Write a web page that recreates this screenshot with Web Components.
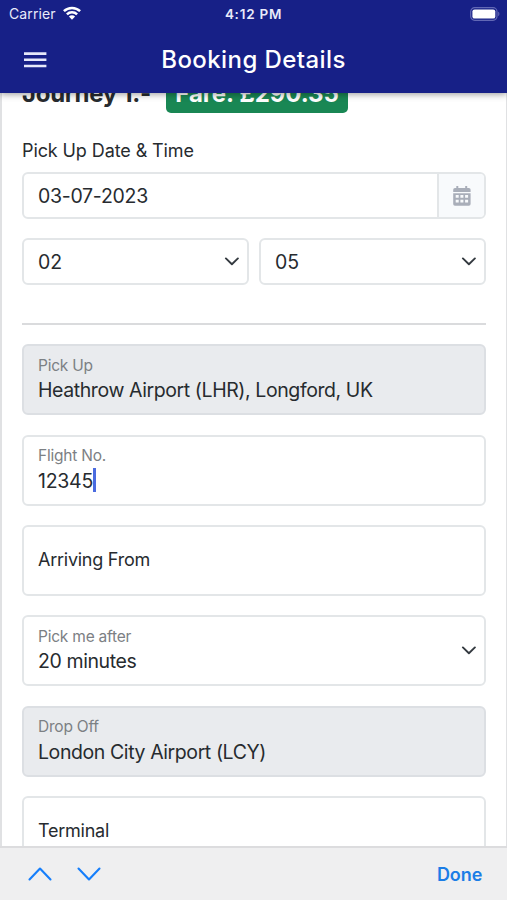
<!DOCTYPE html>
<html lang="en">
<head>
<meta charset="utf-8">
<title>Booking Details</title>
<style>
  html, body { margin: 0; height: 100%; }
  body { font-family: Inter, "Liberation Sans", sans-serif; color: #272b2f; overflow: hidden; background: #fff; }
</style>
</head>
<body>
<booking-app></booking-app>
<script>
const define = (name, html) => {
  const tpl = document.createElement('template');
  tpl.innerHTML = html;
  customElements.define(name, class extends HTMLElement {
    constructor() {
      super();
      this.attachShadow({ mode: 'open' }).append(tpl.content.cloneNode(true));
    }
  });
};

define('status-bar', `
<style>
  :host { display: grid; grid-template-columns: 1fr auto 1fr; align-items: center; height: 28px; padding: 0 7px 0 9px; color: #e9eafa; box-sizing: border-box; }
  .carrier { display: flex; align-items: center; gap: 7px; font-size: 14px; line-height: 16px; letter-spacing: .12px; margin-top: -1px; }
  .time { font-size: 13.5px; font-weight: 600; letter-spacing: .75px; margin-left: -2px; }
  .battery { justify-self: end; display: block; }
  svg { display: block; margin-top: -1px; }
</style>
<div class="carrier"><span>Carrier</span>
  <svg width="18" height="14" viewBox="0 0 18 14" fill="none" stroke="#fff" stroke-width="2.5">
    <path d="M.9 5.2a11.6 11.6 0 0 1 16.2 0"/><path d="M3.9 8.4a7.2 7.2 0 0 1 10.2 0"/>
    <path d="M9 13.8 5.9 10.6a4.4 4.4 0 0 1 6.2 0z" fill="#fff" stroke="none"/>
  </svg></div>
<div class="time">4:12 PM</div>
<svg class="battery" width="30" height="14" viewBox="0 0 30 14">
  <rect x=".7" y=".7" width="26.3" height="12.6" rx="4" fill="none" stroke="#6268b5" stroke-width="1.2"/>
  <rect x="2.4" y="2.4" width="22.9" height="9.2" rx="2.2" fill="#fff"/>
  <path d="M28.2 4.8c1.6.6 1.6 3.8 0 4.4z" fill="#6268b5"/>
</svg>`);

define('app-header', `
<style>
  :host { display: block; height: 93px; background: #172087; color: #fff; position: relative; z-index: 2; box-shadow: 0 1px 7px rgba(0,0,0,.42); }
  .bar { display: grid; grid-template-columns: 1fr auto 1fr; align-items: center; height: 64px; padding: 0 24px; }
  h1 { margin: 0; font-size: 24px; line-height: 30px; font-weight: 500; letter-spacing: .42px; }
  svg { display: block; }
</style>
<status-bar></status-bar>
<div class="bar">
  <svg width="23" height="16" viewBox="0 0 23 16" fill="#e6e8fa"><path d="M0 .3h22.4v2.6H0zM0 6.5h22.4v2.6H0zM0 12.7h22.4v2.6H0z"/></svg>
  <h1><slot></slot></h1><span></span>
</div>`);

define('journey-heading', `
<style>
  :host { display: flex; align-items: center; height: 38px; font-size: 24px; font-weight: 700; line-height: 37px; }
  .title { letter-spacing: -.29px; width: 144px; white-space: nowrap; margin-top: -1px; }
  .fare { box-sizing: border-box; width: 182px; height: 38px; text-align: center; background: #198754; color: #fff; border-radius: 5px; white-space: nowrap; letter-spacing: -.1px; }
</style>
<div class="title"><slot></slot></div><div class="fare"><slot name="fare"></slot></div>`);

define('chevron-down', `
<style>:host { display: block; } svg { display: block; }</style>
<svg width="15" height="9" viewBox="0 0 15 9" fill="none" stroke="#343a40" stroke-width="1.9" stroke-linecap="round" stroke-linejoin="round"><path d="M1.9 1.4 7.9 7.2l6-5.8"/></svg>`);

define('select-box', `
<style>
  :host { display: flex; align-items: center; justify-content: space-between; box-sizing: border-box; height: 47px; padding: 0 8.5px 0 14px; border: 2px solid #e3e6e8; border-radius: 6px; background: #fff; font-size: 19.5px; }
</style>
<span><slot></slot></span><chevron-down></chevron-down>`);

define('date-field', `
<style>
  :host { display: flex; box-sizing: border-box; height: 47px; border: 2px solid #e3e6e8; border-radius: 6px; overflow: hidden; }
  .value { flex: 1; padding-left: 14px; font-size: 19.5px; line-height: 45px; height: 43px; letter-spacing: -.28px; }
  .button { display: grid; place-items: center; width: 45px; border-left: 2px solid #e3e6e8; background: #f8fafc; }
  svg { display: block; }
</style>
<div class="value"><slot></slot></div>
<div class="button"><svg width="18" height="20" viewBox="0 0 18 20">
  <path fill="#a9aeb9" fill-rule="evenodd" d="M3.3 0h2v2h6.9V0h2v2h1.6A1.8 1.8 0 0 1 17.6 3.8V6H.2V3.8A1.8 1.8 0 0 1 2 2h1.3zM.2 7.2h17.4v10.7a1.8 1.8 0 0 1-1.8 1.8H2a1.8 1.8 0 0 1-1.8-1.8zM2.7 9v2.8h3V9zm4.7 0v2.8h3V9zm4.7 0v2.8h3V9zM2.7 13.8v2.8h3v-2.8zm4.7 0v2.8h3v-2.8zm4.7 0v2.8h3v-2.8z"/>
</svg></div>`);

define('float-field', `
<style>
  :host { display: flex; align-items: center; justify-content: space-between; box-sizing: border-box; height: 71px; padding: 0 8.5px 0 14px; border: 2px solid #e3e6e8; border-radius: 6px; background: #fff; }
  :host([disabled]) { background: #e9ebee; border-color: #dcdfe3; }
  .label { font-size: 15.5px; line-height: 20px; letter-spacing: -.22px; color: #7c8084; }
  .value { display: flex; align-items: center; font-size: 19.5px; line-height: 28px; height: 28px; letter-spacing: var(--tracking, -.41px); white-space: nowrap; }
  .text { margin-top: 1px; }
  :host([empty]) .label { display: none; }
  :host([empty]) .value { font-size: 18px; letter-spacing: -.25px; }
  :host([empty]) .text { margin-top: -1px; }
  .caret { display: none; width: 2.5px; height: 24px; background: #4a6be0; }
  :host([focused]) .caret { display: block; }
  chevron-down { display: none; }
  :host([select]) chevron-down { display: block; }
</style>
<div><div class="label"><slot name="label"></slot></div><div class="value"><span class="text"><slot></slot></span><i class="caret"></i></div></div>
<chevron-down></chevron-down>`);

define('keyboard-toolbar', `
<style>
  :host { display: flex; align-items: center; box-sizing: border-box; height: 54px; padding: 0 24.5px 0 28px; border-top: 2px solid #dcdcde; background: #efeff0; color: #1b7de6; position: relative; z-index: 2; }
  svg { display: block; margin: -1px 24.5px 0 0; }
  .done { margin-left: auto; font-size: 18px; font-weight: 600; }
</style>
<svg width="24" height="14" viewBox="0 0 24 14" fill="none" stroke="#157efb" stroke-width="2.1" stroke-linecap="round" stroke-linejoin="round"><path d="M1.5 12.4 12 1.5l10.5 10.9"/></svg>
<svg width="24" height="14" viewBox="0 0 24 14" fill="none" stroke="#157efb" stroke-width="2.1" stroke-linecap="round" stroke-linejoin="round"><path d="M1.5 1.5 12 12.4 22.5 1.5"/></svg>
<span class="done"><slot></slot></span>`);

define('booking-app', `
<style>
  :host { display: flex; flex-direction: column; height: 900px; width: 507px; overflow: hidden; }
  main { flex: 1; min-height: 0; overflow: hidden; box-sizing: border-box; padding: 0 20px; border: solid #e0e1e3; border-width: 0 1.5px 0 2px; }
  journey-heading { margin-top: -18px; }
  .caption { font-size: 18px; line-height: 24px; letter-spacing: -.1px; margin: 26px 0 9px; }
  .times { display: grid; grid-template-columns: 1fr 1fr; gap: 10px; margin-top: 19px; }
  hr { border: 0; height: 2px; background: #dadbdd; margin: 38px 0 19.3px; }
  .fields { display: grid; grid-auto-rows: 70.9px; gap: 19.45px; }
</style>
<app-header>Booking Details</app-header>
<main>
  <journey-heading>Journey 1:-<span slot="fare">Fare: £290.35</span></journey-heading>
  <div class="caption">Pick Up Date &amp; Time</div>
  <date-field>03-07-2023</date-field>
  <div class="times"><select-box>02</select-box><select-box>05</select-box></div>
  <hr>
  <div class="fields">
    <float-field disabled><span slot="label">Pick Up</span>Heathrow Airport (LHR), Longford, UK</float-field>
    <float-field focused style="--tracking:-.26px"><span slot="label">Flight No.</span>12345</float-field>
    <float-field empty>Arriving From</float-field>
    <float-field select style="--tracking:-.4px"><span slot="label">Pick me after</span>20 minutes</float-field>
    <float-field disabled><span slot="label">Drop Off</span>London City Airport (LCY)</float-field>
    <float-field empty>Terminal</float-field>
  </div>
</main>
<keyboard-toolbar>Done</keyboard-toolbar>`);
</script>
</body>
</html>
